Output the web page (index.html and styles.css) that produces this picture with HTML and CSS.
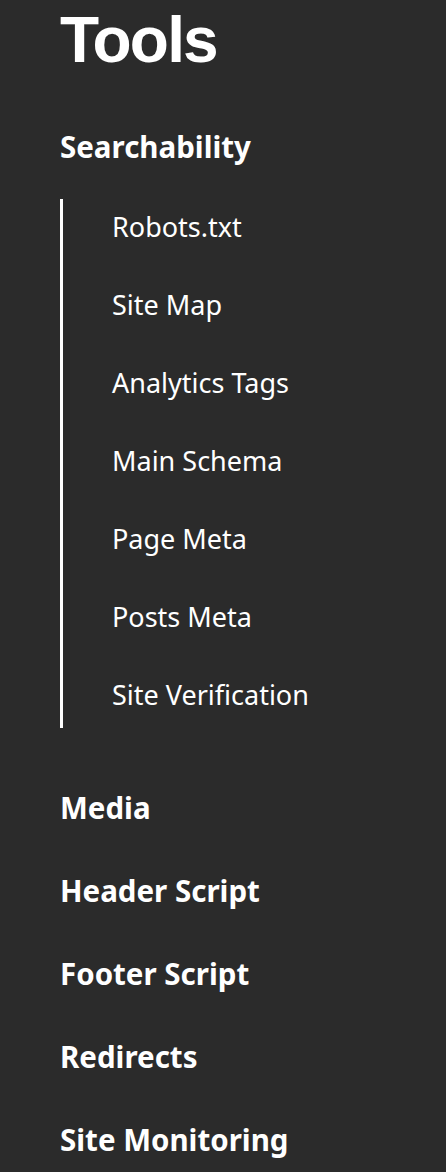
FILE: index.html
```html
<!DOCTYPE html>
<html>
<head>
<meta charset="utf-8">
<link rel="stylesheet" href="styles.css">
</head>
<body>
<nav class="sidebar">
  <h1 class="title">Tools</h1>
  <div class="group">
    <div class="group-title">Searchability</div>
    <ul class="sub">
      <li>Robots.txt</li>
      <li>Site Map</li>
      <li>Analytics Tags</li>
      <li>Main Schema</li>
      <li>Page Meta</li>
      <li>Posts Meta</li>
      <li>Site Verification</li>
    </ul>
  </div>
  <ul class="main">
    <li>Media</li>
    <li>Header Script</li>
    <li>Footer Script</li>
    <li>Redirects</li>
    <li>Site Monitoring</li>
  </ul>
</nav>
</body>
</html>
```
FILE: styles.css
```css
html, body {
  margin: 0;
  padding: 0;
  background: #2b2b2b;
  height: 100%;
  overflow: hidden;
}
.sidebar {
  padding: 0 0 0 60px;
  color: #ffffff;
  font-family: "Noto Sans", sans-serif;
}
.title {
  margin: 0;
  padding-top: 1px;
  font-family: "Liberation Sans", Arial, sans-serif;
  font-weight: 700;
  font-size: 64px;
  letter-spacing: -1.8px;
  line-height: 78px;
}
.group-title {
  font-weight: 700;
  font-size: 29.5px;
  line-height: 40px;
  margin-top: 48px;
}
.sub {
  list-style: none;
  margin: 32px 0 0 0;
  padding: 0 0 0 49px;
  border-left: 3px solid #ffffff;
}
.sub li {
  font-size: 27px;
  line-height: 40px;
  padding: 8px 0 30px 0;
}
.sub li:last-child { padding-bottom: 13px; }
.main {
  list-style: none;
  margin: 60px 0 0 0;
  padding: 0;
}
.main li {
  font-weight: 700;
  font-size: 29.5px;
  line-height: 40px;
  margin-bottom: 43px;
}
```
